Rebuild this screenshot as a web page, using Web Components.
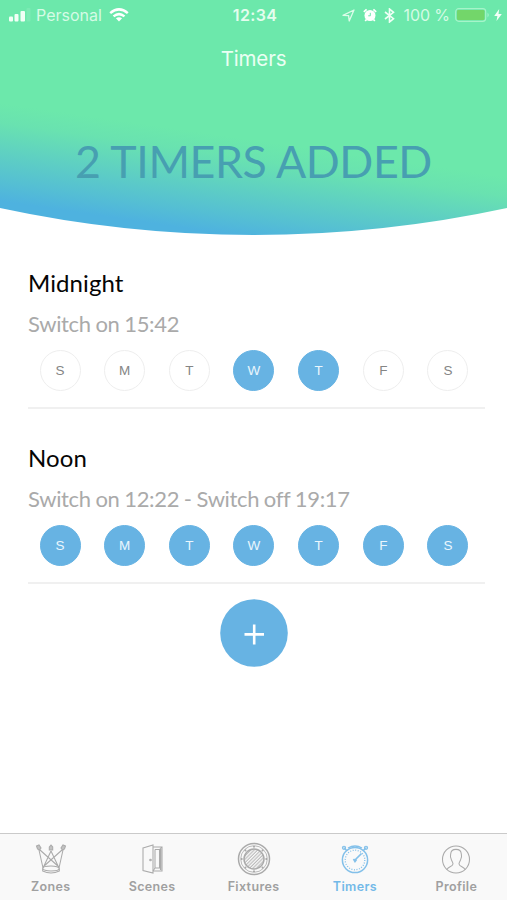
<!DOCTYPE html>
<html lang="en">
<head>
<meta charset="utf-8">
<title>Timers</title>
<style>
html,body{margin:0;padding:0}
body{background:#fff;font-family:Lato,sans-serif}
</style>
</head>
<body>
<timers-app></timers-app>
<script>
const define = (name, html) => customElements.define(name, class extends HTMLElement {
  connectedCallback() {
    if (this.shadowRoot) return;
    this.attachShadow({mode: 'open'}).innerHTML = typeof html === 'function' ? html(this) : html;
  }
});

define('status-bar', `
<style>
:host{display:grid;grid-template-columns:1fr auto 1fr;align-items:center;height:30px;padding:0 5px 0 8px;box-sizing:border-box;color:#fff;font:16px/30px Inter,sans-serif}
.side{display:flex;align-items:center;height:30px;color:#d5fbe5}
.right{justify-content:flex-end}
svg{display:block;flex:none}
.carrier{margin:0 7px 0 5px;letter-spacing:0}
.clock{font-weight:600;font-size:16px;letter-spacing:.35px;color:#e4fdee}
.pct{letter-spacing:-.1px;margin:0 5px 0 9px}
</style>
<div class="side">
 <svg width="23" height="14" viewBox="0 0 23 14" fill="#f1fff6"><rect x="1" y="8.500" width="4" height="5" rx="1"/><rect x="6.500" y="6" width="4" height="7.500" rx="1"/><rect x="12.500" y="3" width="4.500" height="10.500" rx="1"/><rect x="18.500" width="4" height="13.500" rx="1" opacity=".12"/></svg>
 <span class="carrier">Personal</span>
 <svg width="20" height="14" viewBox="0 0 20 14" fill="none" stroke="#fff" stroke-width="2.500"><path d="M1.200 5.100Q10-2.300 18.800 5.100M4.500 8.400Q10 3.900 15.500 8.400"/><path d="M6.900 10.300Q10 8 13.100 10.300L10 13.600Z" fill="#fff" stroke="none"/></svg>
</div>
<span class="clock">12:34</span>
<div class="side right">
 <svg width="13" height="13" viewBox="0 0 13 13" fill="none" stroke="#dcfce9" stroke-width="1.300" stroke-linejoin="round"><path d="M1 6.300L12 1L7.200 12L6.600 6.600Z"/></svg>
 <svg style="margin-left:8px" width="14" height="14" viewBox="0 0 14 14"><circle cx="7" cy="7.500" r="5.500" fill="#fff"/><path d="M.8 3.900L3.600 1.300M10.400 1.300L13.200 3.900M3.500 11.500L2.200 13M10.500 11.500L11.800 13" stroke="#fff" stroke-width="1.700"/><path d="M7.300 4.800V7.800H5.200" fill="none" stroke="#6ce8ab" stroke-width="1"/></svg>
 <svg style="margin-left:7px" width="11" height="15" viewBox="0 0 11 15" fill="none" stroke="#f0fff6" stroke-width="1.600"><path d="M1 4L9.500 10.700L5.500 14V1L9.500 4.300L1 11"/></svg>
 <span class="pct">100 %</span>
 <svg width="35" height="14" viewBox="0 0 35 14"><rect x=".7" y=".7" width="30" height="12.600" rx="3" fill="none" stroke="#a6f4c9" stroke-width="1.200"/><rect x="2" y="2" width="27.500" height="10" rx="1.300" fill="#73d66a"/><path d="M32.500 4.500Q35 7 32.500 9.500Z" fill="#a6f4c9"/></svg>
 <svg style="margin-left:4px" width="8" height="12" viewBox="0 0 8 12" fill="#f4fff8"><path d="M5.200 0L.2 7H3.400L2.500 12L7.800 4.900H4.500Z"/></svg>
</div>`);

define('page-hero', `
<style>
:host{display:grid;height:236px}
:host>*{grid-area:1/1}
.content{display:flex;flex-direction:column;align-items:center}
::slotted(h1){margin:14px 0 0;font:400 20.500px/30px Inter,sans-serif;letter-spacing:-.15px;color:#eafff3}
::slotted(p){margin:57px 0 0;font:400 44.700px/60px Lato,sans-serif;letter-spacing:-.4px;color:#479fb1;white-space:nowrap}
status-bar{align-self:stretch}
</style>
<svg width="507" height="236" viewBox="0 0 507 236">
 <defs><linearGradient id="g" gradientUnits="userSpaceOnUse" x1="0" y1="103" x2="-14" y2="199"><stop offset="0" stop-color="#6ce8ab"/><stop offset=".2" stop-color="#69e2b0"/><stop offset=".8" stop-color="#55bfd3"/><stop offset="1" stop-color="#4eb2df"/></linearGradient></defs>
 <path d="M0 0H507V208A1203 1203 0 0 1 0 208Z" fill="url(#g)"/>
</svg>
<div class="content"><status-bar></status-bar><slot></slot></div>`);

define('day-dot', `
<style>
:host{display:grid;place-items:center;width:41px;height:41px;border-radius:50%;box-sizing:border-box;border:1.500px solid #eee;background:#fff;color:#858585;font:13.500px/1 "Liberation Sans",sans-serif}
:host([on]){background:#67b3e3;border-color:#67b3e3;color:#eaf6fd}
</style><slot></slot>`);

define('timer-item', el => `
<style>
:host{display:block;height:175px;box-sizing:border-box;padding-top:32px;border-bottom:2px solid #f0f0f0}
h2{margin:0;font:400 24px/34px Lato,sans-serif;letter-spacing:.1px;color:#050505}
p{margin:8px 0 0;font:400 22px/32px Lato,sans-serif;letter-spacing:-.35px;word-spacing:-.5px;color:#aaa;white-space:nowrap}
.days{display:flex;justify-content:space-between;padding:0 16.500px 0 11.500px;margin-top:10px}
</style>
<h2>${el.getAttribute('name')}</h2><p>${el.getAttribute('schedule')}</p>
<div class="days">${[...'SMTWTFS'].map((d, i) => `<day-dot${el.getAttribute('days')[i] === '1' ? ' on' : ''}>${d}</day-dot>`).join('')}</div>`);

define('add-button', `
<style>:host{display:block;width:68px;height:68px;margin:15px auto 0}svg{display:block}</style>
<svg width="68" height="68" viewBox="0 0 68 68"><circle cx="34" cy="34" r="33.800" fill="#67b3e3"/><path d="M34.200 25.500V45.500M24.500 35.400H44" stroke="#fff" stroke-width="2.600"/></svg>`);

const icons = {
  zones: `<path d="M5 8L9 26M29 8L25 26M17 9L9 26M17 9L25 26M6 8L25 25M28 8L9 25"/><ellipse cx="17" cy="26.500" rx="8.300" ry="2.500"/><path d="M8.700 26.500V29Q17 33 25.300 29V26.500"/><path d="M2.500 4L5 3L7 6L5.500 8L3.500 7ZM31.500 4L29 3L27 6L28.500 8L30.500 7ZM15.300 5L17 3L18.700 5V8H15.300Z" fill="#bbb"/>`,
  scenes: `<path d="M8 6L18 3V31L8 28.500Z"/><path d="M18 5H27V29H18M20 7.500H24.500V26H20V7.500M18 29L20 26M27 5L24.500 7.500"/><path d="M25.700 7V28" stroke-width="1.500"/><circle cx="15.500" cy="18" r=".8"/>`,
  fixtures: `<circle cx="17" cy="17" r="15.500" stroke-width="1.500"/><circle cx="17" cy="17" r="13.300" stroke-width=".8"/><circle cx="17" cy="17" r="10" fill="url(#hatch)" stroke-width="1.500"/><path d="M17 4V5.500M17 28.500V30M4 17H5.500M28.500 17H30M7.800 7.800L9 9M25 25L26.200 26.200M7.800 26.200L9 25M25 9L26.200 7.800" stroke-width="2"/>`,
  timers: `<circle cx="17" cy="18" r="12.600" stroke-width="1.500"/><circle cx="17" cy="18" r="9.800" stroke-dasharray="1 1.560" stroke-width="1.300"/><path d="M17 18L23.500 11.500M15.500 17L17 19.500L18.500 17.500" stroke-width="1.700"/><path d="M6.500 6L9 9M27.500 6L25 9M10 6Q17 2 24 6" stroke-width="1.300"/><circle cx="6" cy="5.800" r="1.600" fill="currentColor" fill-opacity=".5"/><circle cx="28" cy="5.800" r="1.600" fill="currentColor" fill-opacity=".5"/>`,
  profile: `<circle cx="17" cy="17.500" r="13.500"/><path d="M8 27.500C9 24.500 13.500 25 14 22C14.200 20.500 12.500 19 12 16.500C11 15 11.500 13.500 11.700 12C12 5.800 22 5.800 22.300 12C22.500 13.500 23 15 22 16.500C21.500 19 19.800 20.500 20 22C20.500 25 25 24.500 26 27.500"/>`
};

define('tab-item', el => `
<style>
:host{display:flex;flex-direction:column;align-items:center;flex:1;padding-top:8px;color:#a0a0a0;font:600 12.500px/16px Inter,sans-serif;letter-spacing:.35px}
:host([active]){color:#73b9e8}
svg{display:block;margin-bottom:3px;opacity:.88}
</style>
<svg width="34" height="34" viewBox="0 0 34 34" fill="none" stroke="currentColor" stroke-width="1.050"><defs><pattern id="hatch" width="2.400" height="2.400" patternUnits="userSpaceOnUse" patternTransform="rotate(45)"><path d="M1 0V2.400" stroke="#aaa" stroke-width="1"/></pattern></defs>${icons[el.getAttribute('icon')]}</svg><slot></slot>`);

define('tab-bar', `
<style>:host{display:flex;height:67px;box-sizing:border-box;background:#f9f9f9;border-top:1.500px solid #cacaca}</style><slot></slot>`);

define('timers-app', `
<style>
:host{display:flex;flex-direction:column;width:507px;height:900px;background:#fff;overflow:hidden}
main{flex:1;padding:0 22px 0 28px;margin-top:-2px}
add-button{position:relative;left:-3px}
</style>
<page-hero><h1>Timers</h1><p>2 TIMERS ADDED</p></page-hero>
<main>
 <timer-item name="Midnight" schedule="Switch on 15:42" days="0001100"></timer-item>
 <timer-item name="Noon" schedule="Switch on 12:22 - Switch off 19:17" days="1111111"></timer-item>
 <add-button></add-button>
</main>
<tab-bar>
 <tab-item icon="zones">Zones</tab-item><tab-item icon="scenes">Scenes</tab-item><tab-item icon="fixtures">Fixtures</tab-item><tab-item icon="timers" active>Timers</tab-item><tab-item icon="profile">Profile</tab-item>
</tab-bar>`);
</script>
</body>
</html>
